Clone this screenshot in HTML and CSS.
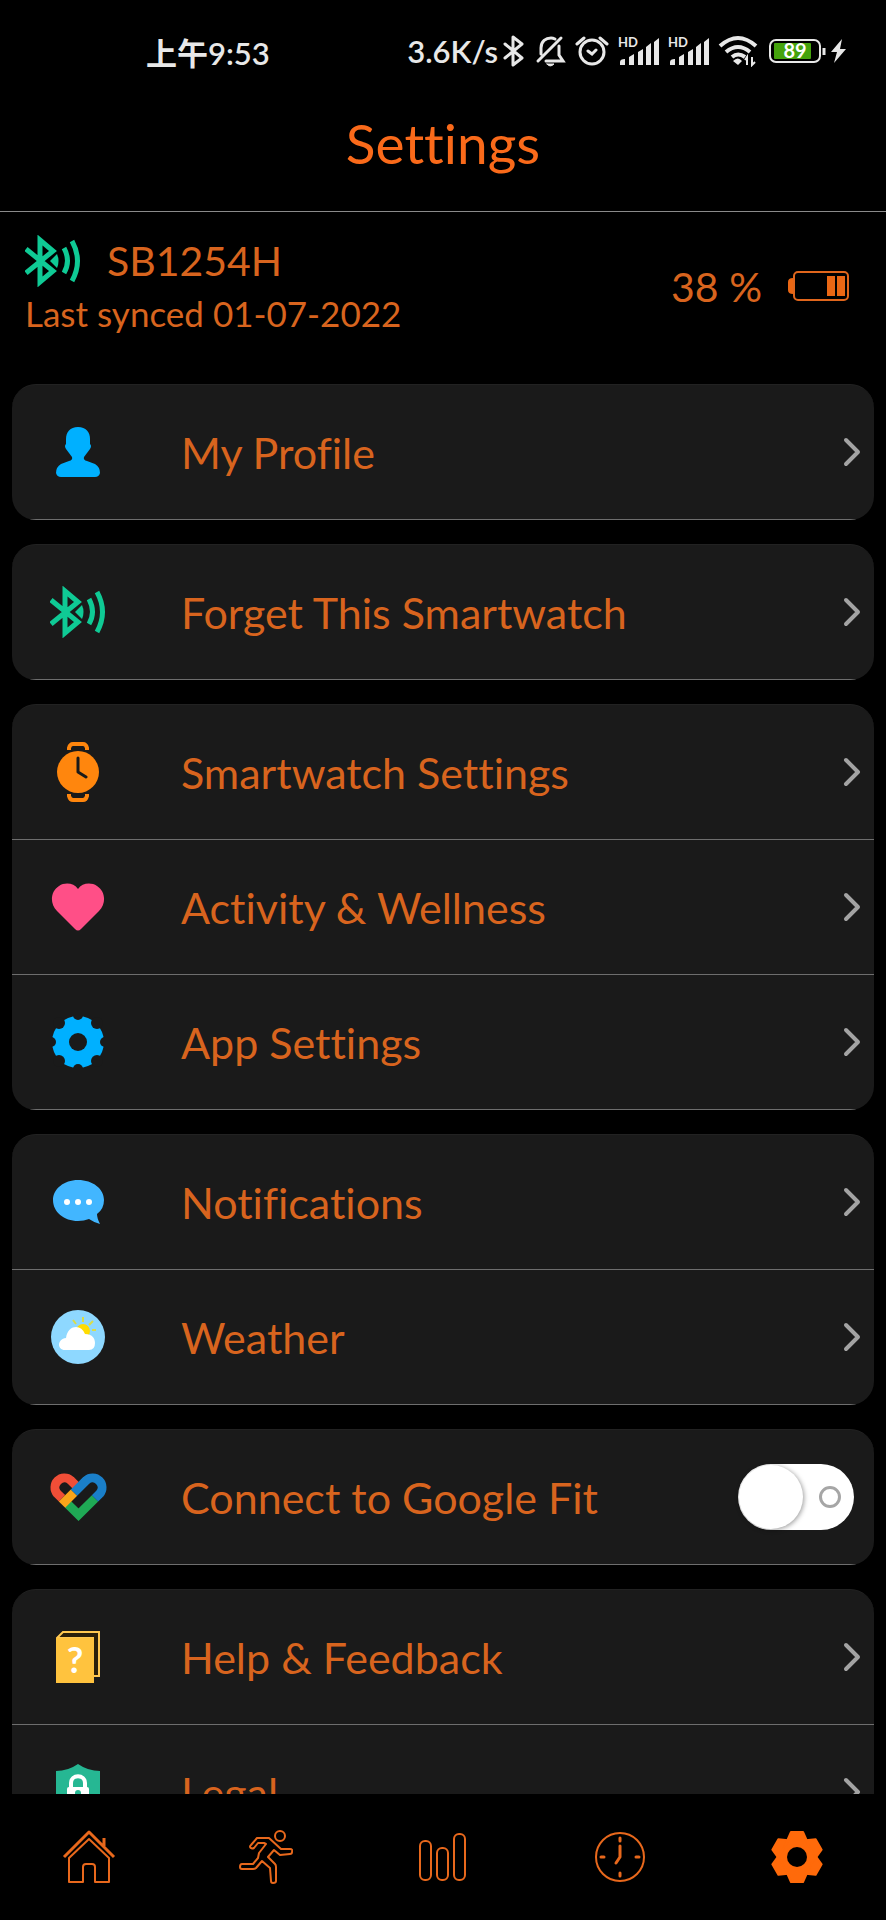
FILE: index.html
```
<!DOCTYPE html>
<html lang="en">
<head>
  <meta charset="UTF-8" />
  <meta name="viewport" content="width=device-width, initial-scale=1.0" />
  <title>Settings</title>
  <link rel="stylesheet" href="styles.css">
</head>
<body>
  <!-- Shared symbols -->
  <svg class="symbols" aria-hidden="true">
    <symbol id="bt-signal" viewBox="0 0 56 52">
      <path d="M1 14L28 36L15 47V5L28 16L1 38" fill="none" stroke="#0fca95" stroke-width="5" />
      <path d="M25 26L32 19Q35 26 32 33Z" fill="#0fca95" />
      <path d="M39 13Q46 26 39 38M47 6Q58 26 47 46" fill="none" stroke="#0fca95" stroke-width="5" />
    </symbol>
    <symbol id="chevron" viewBox="0 0 18 30">
      <path d="M3 3L15 15L3 27" fill="none" stroke="#a3a3a3" stroke-width="4" stroke-linecap="round" stroke-linejoin="round" />
    </symbol>
    <symbol id="signal" viewBox="0 0 41 32">
      <path d="M2 30V27Q2 24 7 24V30ZM11 30V22L16 19V30ZM20 30V17L25 14V30ZM28 30V12L33 8V30ZM36 30V7L41 3V30Z" fill="#e8e8e8" />
    </symbol>
  </svg>

  <header>
    <div class="status-bar">
      <span class="time">上午9:53</span>
      <div class="status-icons">
        <span class="speed">3.6K/s</span>
        <svg width="23" height="32" viewBox="0 0 23 32" fill="none" stroke="#e8e8e8" stroke-width="3" stroke-linejoin="round" stroke-linecap="round">
          <path d="M2 9L19 23L10 30V2L19 9L2 23" />
        </svg>
        <svg width="31" height="32" viewBox="0 0 31 32" fill="none" stroke="#e8e8e8" stroke-width="3" stroke-linecap="round">
          <path d="M6 19V13C6 6 11 3 16 3Q18 3 20 4M24 11V20L28 26H11M3 26L26 3" />
          <path d="M12 29H19Q15 33 12 29Z" fill="#e8e8e8" stroke-width="1" />
        </svg>
        <svg width="34" height="32" viewBox="0 0 34 32" fill="none" stroke="#e8e8e8" stroke-width="3" stroke-linecap="round">
          <circle cx="17" cy="17" r="12" />
          <path d="M2 9L9 3M32 9L25 3M13 16L17 19L21 15" />
        </svg>
        <svg width="41" height="32"><use href="#signal" /><text x="0" y="12" class="hd-text">HD</text></svg>
        <svg width="41" height="32"><use href="#signal" /><text x="0" y="12" class="hd-text">HD</text></svg>
        <svg width="40" height="32" viewBox="0 0 40 32" fill="none" stroke="#e8e8e8" stroke-width="4">
          <path d="M2 11Q20 -5 38 11M8 17Q20 7 32 17M14 22Q20 17 27 22" />
          <path d="M15 26Q20 21 24 26L20 30Z" fill="#e8e8e8" stroke="none" />
          <path d="M29 30V22L27 25M34 22V30L37 27" stroke-width="2" />
        </svg>
        <svg width="80" height="32" viewBox="0 0 80 32">
          <rect x="3" y="5" width="50" height="22" rx="6" fill="none" stroke="#e8e8e8" stroke-width="2" />
          <rect x="7" y="8" width="37" height="16" rx="1" fill="#45a30d" />
          <path d="M57 13V20" stroke="#e8e8e8" stroke-width="3" />
          <path d="M75 4L64 17H70L67 28L79 14H73Z" fill="#e8e8e8" />
          <text x="28" y="23" class="charge-text">89</text>
        </svg>
      </div>
    </div>
    <h1>Settings</h1>
  </header>

  <main>
    <section class="device">
      <div>
        <div class="device-name">
          <svg width="56" height="52"><use href="#bt-signal" /></svg>
          <span>SB1254H</span>
        </div>
        <p class="synced">Last synced 01-07-2022</p>
      </div>
      <div class="device-battery">
        <span>38 %</span>
        <svg width="62" height="32" viewBox="0 0 62 32">
          <rect x="6" y="2" width="54" height="28" rx="4" fill="none" stroke="#e0661c" stroke-width="2" />
          <path d="M5 8V24Q0 24 0 20V12Q0 8 5 8ZM39 6H47V26H39ZM49 6H57V26H49Z" fill="#ea6714" />
        </svg>
      </div>
    </section>

    <div class="group">
      <a class="row" href="#profile">
        <span class="icon">
          <svg width="44" height="50" viewBox="0 0 44 50">
            <path d="M22 0C30 0 34 5 34 12V17Q36 19 34 22L28 30Q27 33 31 34L39 37Q44 40 44 46Q43 50 39 50H5Q1 50 0 46Q0 40 5 37L13 34Q17 33 16 30L10 22Q8 19 10 17V12C10 5 14 0 22 0Z" fill="#00b0ff" />
          </svg>
        </span>
        <span class="label">My Profile</span>
        <svg class="chevron"><use href="#chevron" /></svg>
      </a>
    </div>

    <div class="group">
      <a class="row" href="#forget">
        <span class="icon"><svg width="56" height="52"><use href="#bt-signal" /></svg></span>
        <span class="label">Forget This Smartwatch</span>
        <svg class="chevron"><use href="#chevron" /></svg>
      </a>
    </div>

    <div class="group">
      <a class="row" href="#smartwatch">
        <span class="icon">
          <svg width="44" height="60" viewBox="0 0 44 60">
            <circle cx="22" cy="30" r="21" fill="#ff860d" />
            <path d="M13 8V6Q14 2 17 2H27Q30 2 31 6V8M13 52V54Q14 58 17 58H27Q30 58 31 54V52" fill="none" stroke="#ff860d" stroke-width="4" />
            <path d="M22 16V30L30 35" fill="none" stroke="#1a1a1a" stroke-width="3" stroke-linecap="round" stroke-linejoin="round" />
          </svg>
        </span>
        <span class="label">Smartwatch Settings</span>
        <svg class="chevron"><use href="#chevron" /></svg>
      </a>
      <a class="row" href="#wellness">
        <span class="icon">
          <svg width="54" height="48" viewBox="0 0 54 48">
            <path d="M27 6C31 0 40 -1 46 3C54 8 56 20 48 28L30 46Q27 49 24 46L6 28C-2 20 0 8 8 3C14 -1 23 0 27 6Z" fill="#ff4f87" />
          </svg>
        </span>
        <span class="label">Activity &amp; Wellness</span>
        <svg class="chevron"><use href="#chevron" /></svg>
      </a>
      <a class="row" href="#app">
        <span class="icon">
          <svg width="54" height="54" viewBox="-27 -27 54 54">
            <circle r="26" fill="#00b0ff" />
            <g fill="#1a1a1a">
              <circle r="9" />
              <circle cy="-27" r="5" />
              <circle cy="27" r="5" />
              <circle cx="-27" r="5" />
              <circle cx="27" r="5" />
              <circle cx="-19" cy="-19" r="6" />
              <circle cx="19" cy="-19" r="6" />
              <circle cx="-19" cy="19" r="6" />
              <circle cx="19" cy="19" r="6" />
            </g>
          </svg>
        </span>
        <span class="label">App Settings</span>
        <svg class="chevron"><use href="#chevron" /></svg>
      </a>
    </div>

    <div class="group">
      <a class="row" href="#notifications">
        <span class="icon">
          <svg width="51" height="44" viewBox="0 0 51 44">
            <path d="M25 0C40 0 51 9 51 20Q51 29 44 34Q44 38 47 44Q42 43 36 39Q31 41 25 41C11 41 0 32 0 20C0 9 11 0 25 0Z" fill="#42b6ff" />
            <g fill="#fff">
              <circle cx="14" cy="22" r="3" />
              <circle cx="25" cy="22" r="3" />
              <circle cx="36" cy="22" r="3" />
            </g>
          </svg>
        </span>
        <span class="label">Notifications</span>
        <svg class="chevron"><use href="#chevron" /></svg>
      </a>
      <a class="row" href="#weather">
        <span class="icon">
          <svg width="54" height="54" viewBox="0 0 54 54">
            <circle cx="27" cy="27" r="27" fill="#8ed8ff" />
            <circle cx="32" cy="21" r="7" fill="#ffdc00" />
            <path d="M32 7V12M22 10L25 14M42 11L38 15M41 20H45" stroke="#d9dc4a" stroke-width="2" />
            <path d="M14 40C6 40 6 29 15 28C16 20 21 17 25 17Q31 17 34 24C41 24 44 28 44 33Q44 40 38 40Z" fill="#fff" />
          </svg>
        </span>
        <span class="label">Weather</span>
        <svg class="chevron"><use href="#chevron" /></svg>
      </a>
    </div>

    <div class="group">
      <label class="row" for="googleFit">
        <span class="icon">
          <svg width="57" height="48" viewBox="0 0 57 48" fill="none" stroke-width="9">
            <path d="M12 25.300L7.300 20.700A9.500 9.500 0 0 1 20.700 7.300L26 12.600" stroke="#f04e37" />
            <path d="M45 25.400L28.500 41.700L18 31.400" stroke="#1fa955" />
            <path d="M24 19.600L12 31.600" stroke="#f9a51a" />
            <path d="M24 19.600L36.300 7.300A9.500 9.500 0 0 1 49.700 20.700L45 25.400" stroke="#1a7fc9" />
          </svg>
        </span>
        <span class="label">Connect to Google Fit</span>
        <input type="checkbox" id="googleFit" class="switch">
      </label>
    </div>

    <div class="group">
      <a class="row" href="#help">
        <span class="icon">
          <svg width="44" height="52" viewBox="0 0 44 52">
            <path d="M1 7L7 1H43V45H37V7Z" fill="#2b200a" stroke="#ffc851" stroke-width="2" />
            <rect y="7" width="38" height="45" fill="#ffc33e" />
            <text x="19" y="42" class="book-text">?</text>
          </svg>
        </span>
        <span class="label">Help &amp; Feedback</span>
        <svg class="chevron"><use href="#chevron" /></svg>
      </a>
      <a class="row" href="#legal">
        <span class="icon">
          <svg width="44" height="56" viewBox="0 0 44 56">
            <path d="M22 0Q32 7 44 7V30C44 43 34 51 22 56C10 51 0 43 0 30V7Q12 7 22 0Z" fill="#26b793" />
            <path d="M15 24V19C15 10 29 10 29 19V24" fill="none" stroke="#fff" stroke-width="4" />
            <rect x="11" y="23" width="22" height="18" rx="2" fill="#fff" />
            <circle cx="22" cy="29" r="3" fill="#26b793" />
          </svg>
        </span>
        <span class="label">Legal</span>
        <svg class="chevron"><use href="#chevron" /></svg>
      </a>
    </div>
  </main>

  <nav>
    <a href="#home" aria-label="Home">
      <svg width="54" height="54" viewBox="0 0 54 54">
        <path d="M2 27L27 2L52 27M42 8V16" stroke-width="3" />
        <path d="M7 28L27 9L47 28V52H33V37Q33 34 30 34H24Q21 34 21 37V52H7Z" />
      </svg>
    </a>
    <a href="#activity" aria-label="Activity">
      <svg width="54" height="54" viewBox="0 0 54 54">
        <circle cx="41" cy="6" r="5" />
        <path d="M18 8H30L42 19L51 19Q54 19 53 22Q53 24 51 24L41 25L35 20L29 27L36 34Q37 35 37 37V51Q37 53 34 53Q32 53 32 51L31 38L23 31L17 38Q16 39 14 39H3Q1 39 1 37Q1 34 3 34H14L19 28L20 23L27 14L25 13H19L15 18Q13 19 12 18Q10 17 12 15Z" />
      </svg>
    </a>
    <a href="#stats" aria-label="Statistics">
      <svg width="48" height="48" viewBox="0 0 48 48">
        <rect x="1" y="8" width="11" height="39" rx="5" />
        <rect x="18" y="15" width="11" height="32" rx="5" />
        <rect x="35" y="1" width="11" height="46" rx="5" />
      </svg>
    </a>
    <a href="#history" aria-label="History">
      <svg width="50" height="50" viewBox="0 0 50 50">
        <circle cx="25" cy="25" r="24" />
        <path d="M25 6V9M25 41V44M6 25H9M41 25H44M25 14V25L21 31" stroke-width="3" stroke-linecap="round" />
      </svg>
    </a>
    <a href="#settings" aria-label="Settings" aria-current="page">
      <svg class="active" width="54" height="54" viewBox="-27 -27 54 54">
        <circle r="19" />
        <path id="tooth" d="M-6 -25H6L10 -16H-10Z" />
        <use href="#tooth" transform="rotate(60)" />
        <use href="#tooth" transform="rotate(120)" />
        <use href="#tooth" transform="rotate(180)" />
        <use href="#tooth" transform="rotate(240)" />
        <use href="#tooth" transform="rotate(300)" />
        <circle class="hole" r="10" />
      </svg>
    </a>
  </nav>
</body>
</html>
```
FILE: styles.css
```
* {
  box-sizing: border-box;
}

body {
  font-family: 'Lato', 'Noto Sans CJK SC', sans-serif;
  font-variant-ligatures: none;
  background: #000;
  color: #d8641e;
  margin: 0;
  height: 100vh;
  display: flex;
  flex-direction: column;
  font-size: 43px;
}

svg {
  display: block;
  flex-shrink: 0;
}

.symbols {
  position: absolute;
  width: 0;
  height: 0;
}

/* Header */
header {
  flex-shrink: 0;
  padding-top: 20px;
  border-bottom: 1px solid #8a8a8a;
}

.status-bar {
  display: flex;
  justify-content: space-between;
  align-items: center;
  height: 62px;
  padding: 0 39px 0 146px;
  color: #e8e8e8;
  font-size: 31px;
  font-weight: 600;
}

.status-icons {
  display: flex;
  align-items: center;
  gap: 9px;
}

.speed {
  margin-right: -4px;
}

.hd-text {
  font-size: 13px;
  font-weight: 700;
  fill: #e8e8e8;
}

.charge-text {
  font-size: 20px;
  font-weight: 700;
  fill: #fff;
  text-anchor: middle;
}

h1 {
  margin: 0;
  padding-bottom: 7px;
  line-height: 122px;
  text-align: center;
  font-size: 55px;
  font-weight: 400;
  color: #fa6a1a;
}

/* Content */
main {
  flex: 1;
  min-height: 0;
  overflow: hidden;
}

.device {
  display: flex;
  justify-content: space-between;
  align-items: center;
  padding: 22px 36px 46px 25px;
  font-size: 41px;
}

.device-name {
  display: flex;
  align-items: center;
  gap: 26px;
  line-height: 54px;
}

.synced {
  margin: 0;
  font-size: 35px;
  line-height: 50px;
}

.device-battery {
  display: flex;
  align-items: center;
  gap: 26px;
}

.group {
  margin: 0 12px 24px;
  background: #1a1a1a;
  border-top: 1px solid #222;
  border-radius: 24px;
  overflow: hidden;
}

.row {
  display: flex;
  align-items: center;
  height: 135px;
  padding-right: 13px;
  border-bottom: 1px solid #6e6e6e;
  color: inherit;
  text-decoration: none;
}

.icon {
  display: flex;
  justify-content: center;
  width: 132px;
  margin-right: 37px;
}

.label {
  flex: 1;
}

.chevron {
  width: 18px;
  height: 30px;
}

.switch {
  appearance: none;
  display: flex;
  align-items: center;
  justify-content: space-between;
  width: 116px;
  height: 66px;
  margin: 0 7px 0 0;
  padding: 0 13px 0 1px;
  background: #fff;
  border-radius: 33px;
}

.switch::before {
  content: '';
  width: 64px;
  height: 64px;
  background: #fff;
  border-radius: 50%;
  box-shadow: 1px 1px 5px rgba(0, 0, 0, 0.4);
}

.switch::after {
  content: '';
  width: 16px;
  height: 16px;
  border: 3px solid #a6a6a6;
  border-radius: 50%;
}

.book-text {
  font-size: 36px;
  font-weight: 700;
  fill: #fff;
  text-anchor: middle;
}

/* Bottom navigation */
nav {
  display: flex;
  flex-shrink: 0;
  height: 126px;
}

nav a {
  flex: 1;
  display: flex;
  align-items: center;
  justify-content: center;
}

nav svg {
  fill: none;
  stroke: #e8681c;
  stroke-width: 2;
  stroke-linejoin: round;
}

nav .active {
  fill: #ff6a0a;
  stroke: #ff6a0a;
}

nav .hole {
  fill: #000;
  stroke: none;
}
```
